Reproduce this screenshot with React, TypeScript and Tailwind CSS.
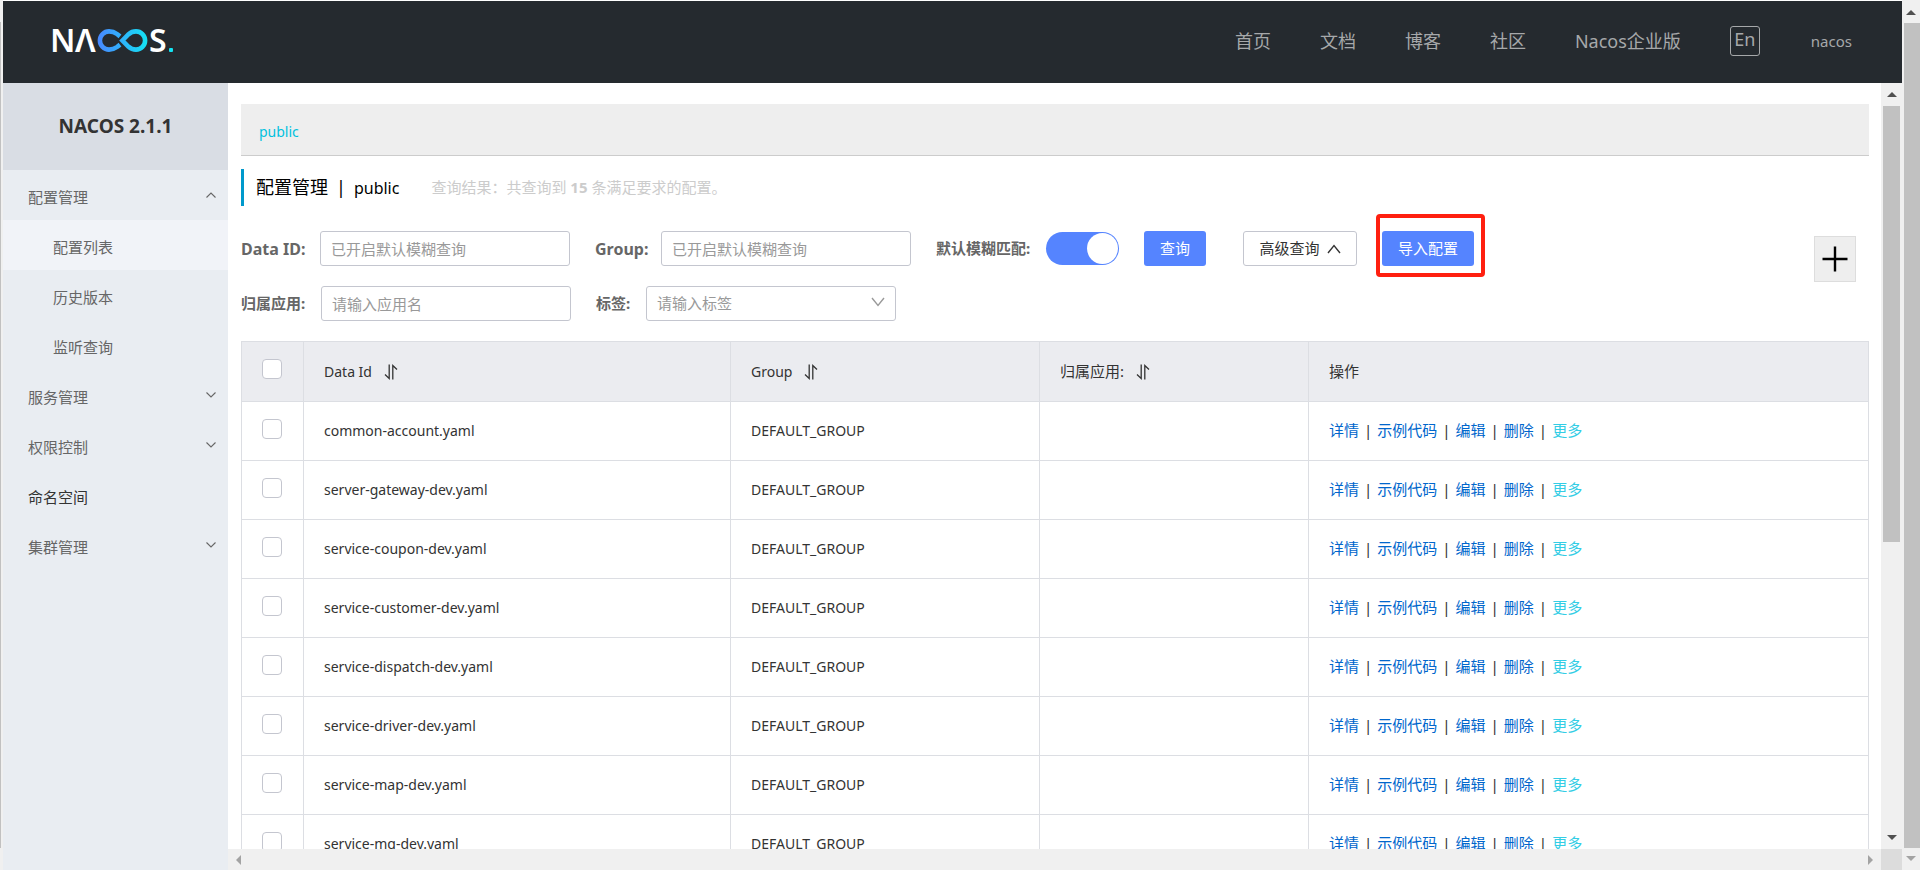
const NAV = ['首页', '文档', '博客', '社区', 'Nacos企业版'];

type MenuItem = { label: string; open?: boolean; leaf?: boolean; children?: string[] };

const MENU: MenuItem[] = [
  { label: '配置管理', open: true, children: ['配置列表', '历史版本', '监听查询'] },
  { label: '服务管理' },
  { label: '权限控制' },
  { label: '命名空间', leaf: true },
  { label: '集群管理' },
];

const CONFIGS = [
  'common-account.yaml',
  'server-gateway-dev.yaml',
  'service-coupon-dev.yaml',
  'service-customer-dev.yaml',
  'service-dispatch-dev.yaml',
  'service-driver-dev.yaml',
  'service-map-dev.yaml',
  'service-mq-dev.yaml',
];

const ACTIONS = ['详情', '示例代码', '编辑', '删除'];

const CHECKBOX =
  'block size-5 appearance-none rounded border border-[#c4c6cf] bg-white checked:border-[#5584ff] checked:bg-[#5584ff]';
const FIELD =
  'h-[35px] w-[250px] rounded-[3px] border border-[#c4c6cf] bg-white px-[10px] text-[15px] text-[#333] placeholder:text-[#999] focus:outline-none';
const LABEL = 'shrink-0 font-bold text-[#666]';

function Logo() {
  return (
    <svg className="-ml-1" width="130" height="44" viewBox="-4 -10 130 44" role="img" aria-label="Nacos">
      <defs>
        <linearGradient id="loop" x1="44" y1="0" x2="95" y2="0" gradientUnits="userSpaceOnUse">
          <stop offset="0" stopColor="#4a86ff" />
          <stop offset="0.5" stopColor="#2eb4fb" />
          <stop offset="1" stopColor="#13e3f2" />
        </linearGradient>
      </defs>
      <g fill="#fff" fontFamily="'Noto Sans', sans-serif" fontWeight="600" fontSize="32">
        <text x="-3" y="23">N</text>
        <text x="22" y="23">Λ</text>
        <text x="96" y="23">S</text>
      </g>
      <g fill="none" stroke="url(#loop)" strokeWidth="4.6">
        <path d="M67 7.4L64 5C61.6 3.2 59 2.4 56 2.4A9 9 0 0 0 56 20.6C59 20.6 61.6 19.8 64 18L67 15.6" />
        <path d="M69.4 11.5L75.6 5.2C77.7 3.3 80 2.4 83 2.4A9 9 0 0 1 83 20.6C80 20.6 77.7 19.7 75.6 17.8Z" />
      </g>
      <rect x="116" y="19" width="4" height="4" rx="1" fill="#13e3f2" />
    </svg>
  );
}

function SortIcon() {
  return (
    <svg width="14" height="18" viewBox="0 0 14 18" fill="none" stroke="#333" strokeWidth="1.3" aria-hidden="true">
      <path d="M5.2 1.5V15.5L1 11.5" />
      <path d="M8.8 16.5V2.5L13 6.5" />
    </svg>
  );
}

function Chevron({ up = false, large = false }: { up?: boolean; large?: boolean }) {
  return (
    <svg
      width={large ? 14 : 10}
      height={large ? 10 : 6}
      viewBox={large ? '0 0 14 10' : '0 0 10 6'}
      fill="none"
      stroke="currentColor"
      strokeWidth={large ? 1.4 : 1.1}
      aria-hidden="true"
    >
      {large ? (
        <path d={up ? 'M1 9L7 1.5L13 9' : 'M1 1L7 8.5L13 1'} />
      ) : (
        <path d={up ? 'M0.5 5.5L5 1L9.5 5.5' : 'M0.5 0.5L5 5L9.5 0.5'} />
      )}
    </svg>
  );
}

function Arrow({ dir, color }: { dir: 'up' | 'down' | 'left' | 'right'; color: string }) {
  const d = {
    up: 'M0 7L5 2L10 7Z',
    down: 'M0 3L5 8L10 3Z',
    left: 'M7 0L2 5L7 10Z',
    right: 'M3 0L8 5L3 10Z',
  }[dir];
  return (
    <svg width="10" height="10" viewBox="0 0 10 10" fill={color} aria-hidden="true">
      <path d={d} />
    </svg>
  );
}

function Header() {
  return (
    <header className="flex h-[82px] shrink-0 items-center justify-between bg-[#252a2f] px-[50px] pb-[2px]">
      <a href="#home">
        <Logo />
      </a>
      <nav className="flex items-center gap-[49px] text-[18px] leading-6 text-[#a6a8aa]">
        {NAV.map((item) => (
          <a key={item} href={`#${item}`}>
            {item}
          </a>
        ))}
        <button type="button" className="h-[30px] w-[30px] rounded-[3px] border border-[#a6a8aa] pb-1 leading-6">
          En
        </button>
        <a href="#user" className="ml-0.5 text-[15px]">
          nacos
        </a>
      </nav>
    </header>
  );
}

function Sidebar() {
  return (
    <aside className="w-[225px] shrink-0 bg-[#e9edf2] text-[15px] text-[#666]">
      <h1 className="flex h-[87px] items-center justify-center bg-[#d9dde4] text-[19px] font-bold text-[#333]">
        NACOS 2.1.1
      </h1>
      <ul>
        {MENU.map((item) => (
          <li key={item.label}>
            <a
              href={`#${item.label}`}
              className={`flex h-[50px] items-center justify-between pt-1 pr-3 pl-[25px] ${item.leaf ? 'text-[#333]' : ''}`}
            >
              {item.label}
              {!item.leaf && (
                <span className="pb-1">
                  <Chevron up={item.open} />
                </span>
              )}
            </a>
            {item.children && (
              <ul>
                {item.children.map((child, i) => (
                  <li key={child}>
                    <a
                      href={`#${child}`}
                      className={`flex h-[50px] items-center pt-1 pl-[50px] ${i === 0 ? 'bg-[#f1f3f8]' : ''}`}
                    >
                      {child}
                    </a>
                  </li>
                ))}
              </ul>
            )}
          </li>
        ))}
      </ul>
    </aside>
  );
}

function Filters() {
  return (
    <form className="mt-[25px] flex items-start justify-between pr-[13px]">
      <div className="flex flex-col gap-5">
        <div className="flex h-[35px] items-center">
          <label htmlFor="dataId" className={`${LABEL} w-[79px] text-[16px]`}>
            Data ID:
          </label>
          <input id="dataId" className={FIELD} placeholder="已开启默认模糊查询" />
          <label htmlFor="group" className={`${LABEL} ml-[25px] w-[66px] text-[16px]`}>
            Group:
          </label>
          <input id="group" className={FIELD} placeholder="已开启默认模糊查询" />
          <label htmlFor="fuzzy" className={`${LABEL} ml-[25px] w-[110px] text-[15px]`}>
            默认模糊匹配:
          </label>
          <input
            id="fuzzy"
            type="checkbox"
            role="switch"
            defaultChecked
            className="flex h-[33px] w-[73px] shrink-0 appearance-none items-center rounded-full bg-[#c4c6cf] px-px before:size-[31px] before:rounded-full before:bg-white checked:justify-end checked:bg-[#5584ff]"
          />
          <button type="button" className="ml-[25px] h-[35px] w-[62px] rounded-[3px] bg-[#5584ff] text-[15px] text-white">
            查询
          </button>
          <button
            type="button"
            className="ml-[37px] flex h-[35px] w-[114px] items-center justify-center gap-[7px] rounded-[3px] border border-[#c4c6cf] text-[15px] text-[#333]"
          >
            高级查询
            <Chevron up large />
          </button>
          <div className="relative ml-[25px]">
            <button type="button" className="block h-[35px] w-[92px] rounded-[3px] bg-[#5584ff] text-[15px] text-white">
              导入配置
            </button>
            <span className="pointer-events-none absolute -top-[17px] -right-[11px] -bottom-[11px] -left-[6px] rounded-[4px] border-4 border-[#ff2010]" />
          </div>
        </div>
        <div className="flex h-[35px] items-center">
          <label htmlFor="app" className={`${LABEL} w-20 text-[15px]`}>
            归属应用:
          </label>
          <input id="app" className={FIELD} placeholder="请输入应用名" />
          <label htmlFor="tags" className={`${LABEL} ml-[25px] w-[50px] text-[15px]`}>
            标签:
          </label>
          <div className="relative">
            <select
              id="tags"
              defaultValue=""
              className="block h-[35px] w-[250px] appearance-none rounded-[3px] border border-[#c4c6cf] bg-white px-[10px] text-[15px] text-[#999]"
            >
              <option value="">请输入标签</option>
            </select>
            <span className="pointer-events-none absolute inset-y-0 right-[11px] flex items-center pb-1 text-[#999]">
              <Chevron large />
            </span>
          </div>
        </div>
      </div>
      <button
        type="button"
        aria-label="新建配置"
        className="mt-[5px] flex h-[46px] w-[42px] items-center justify-center border border-[#ddd] bg-[#eee]"
      >
        <svg width="26" height="26" viewBox="0 0 26 26" stroke="#000" strokeWidth="2.4" aria-hidden="true">
          <path d="M0.5 13H25.5M13 0.5V25.5" />
        </svg>
      </button>
    </form>
  );
}

const TH = 'h-[60px] border-r border-b border-[#dcdee3] px-5 text-left font-normal';
const TD = 'h-[59px] border-r border-b border-[#dcdee3] px-5';

function ConfigTable() {
  return (
    <table className="mt-5 w-full table-fixed border-separate border-spacing-0 border-t border-l border-[#dcdee3] text-[15px] text-[#333]">
      <colgroup>
        <col className="w-[62px]" />
        <col className="w-[427px]" />
        <col className="w-[309px]" />
        <col className="w-[269px]" />
        <col />
      </colgroup>
      <thead className="bg-[#ebecf0]">
        <tr>
          <th className={`${TH} pb-[5px]`}>
            <input type="checkbox" aria-label="全选" className={CHECKBOX} />
          </th>
          <th className={TH}>
            <span className="flex items-center gap-3 text-[14px]">
              Data Id
              <SortIcon />
            </span>
          </th>
          <th className={TH}>
            <span className="flex items-center gap-3 text-[14px]">
              Group
              <SortIcon />
            </span>
          </th>
          <th className={TH}>
            <span className="flex items-center gap-3">
              归属应用:
              <SortIcon />
            </span>
          </th>
          <th className={TH}>操作</th>
        </tr>
      </thead>
      <tbody>
        {CONFIGS.map((name) => (
          <tr key={name}>
            <td className={`${TD} pb-1`}>
              <input type="checkbox" aria-label={name} className={CHECKBOX} />
            </td>
            <td className={`${TD} pb-[2px] text-[14px]`}>{name}</td>
            <td className={`${TD} pb-[2px] text-[14px]`}>DEFAULT_GROUP</td>
            <td className={TD}></td>
            <td className={`${TD} pb-[2px] whitespace-nowrap`}>
              {ACTIONS.map((a) => (
                <span key={a}>
                  <a href={`#${a}`} className="text-[#0066cc]">
                    {a}
                  </a>
                  <span className="mx-[5px]">|</span>
                </span>
              ))}
              <a href="#more" className="text-[#33cde5]">
                更多
              </a>
            </td>
          </tr>
        ))}
      </tbody>
    </table>
  );
}

function Content() {
  return (
    <main className="min-h-0 flex-1 overflow-hidden bg-white pt-[21px] pr-3 pl-[13px]">
      <div className="flex h-[52px] items-center border-b border-[#ccc] bg-[#eee] pt-1 pl-[18px] text-[14px]">
        <a href="#public" className="text-[#00c1de]">
          public
        </a>
      </div>
      <div className="mt-[13px] flex h-[37px] items-center border-l-[3px] border-[#0099cc] pl-3">
        <h2 className="flex items-baseline gap-2 text-[18px] text-black">
          <span>配置管理</span>
          <span>|</span>
          <span className="text-[16px]">public</span>
        </h2>
        <p className="ml-8 text-[15px] text-[#ccc]">
          查询结果：共查询到 <strong>15</strong> 条满足要求的配置。
        </p>
      </div>
      <Filters />
      <ConfigTable />
    </main>
  );
}

export default function App() {
  return (
    <div className="flex h-screen overflow-hidden bg-white font-['Noto_Sans','Noto_Sans_CJK_SC',sans-serif]">
      <div className="w-[3px] shrink-0 bg-[#f0f0f0] pt-[22px] pb-[22px]" aria-hidden="true">
        <div className="h-full w-px bg-[#c1c1c1]" />
      </div>
      <div className="flex min-w-0 flex-1 flex-col pt-px">
        <Header />
        <div className="flex min-h-0 flex-1">
          <Sidebar />
          <div className="flex min-w-0 flex-1 flex-col">
            <Content />
            <div className="flex h-[21px] shrink-0 items-center justify-between bg-[#f0f0f0] px-[6px]" aria-hidden="true">
              <Arrow dir="left" color="#a3a3a3" />
              <Arrow dir="right" color="#a3a3a3" />
            </div>
          </div>
          <div className="flex w-[21px] shrink-0 flex-col" aria-hidden="true">
            <div className="flex min-h-0 flex-1 flex-col items-center justify-between bg-[#f0f0f0] py-[7px]">
              <Arrow dir="up" color="#505050" />
              <div className="mt-[6px] mb-auto h-[58%] w-[17px] bg-[#c1c1c1]" />
              <Arrow dir="down" color="#505050" />
            </div>
            <div className="h-[21px] bg-[#dcdcdc]" />
          </div>
        </div>
      </div>
      <div className="flex w-[18px] shrink-0 flex-col items-center bg-[#f0f0f0] pt-2 pb-[7px]" aria-hidden="true">
        <Arrow dir="up" color="#505050" />
        <div className="my-[5px] w-4 flex-1 self-end bg-[#c1c1c1]" />
        <Arrow dir="down" color="#a3a3a3" />
      </div>
    </div>
  );
}
